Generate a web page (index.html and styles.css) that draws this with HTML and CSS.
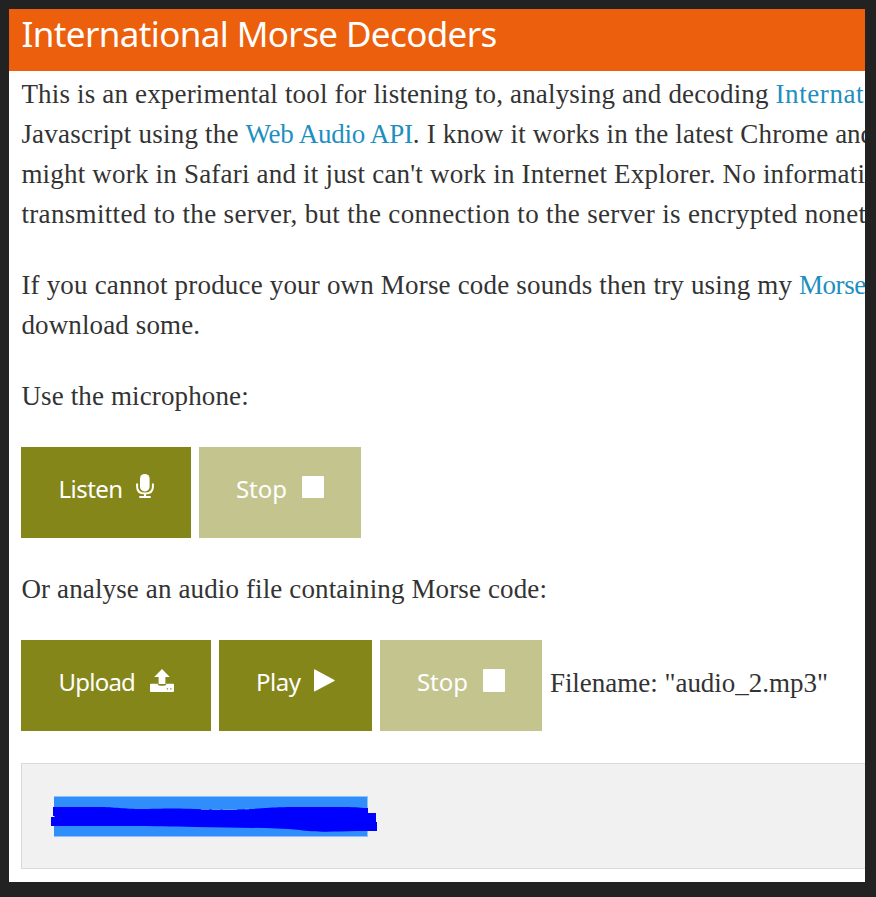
FILE: index.html
```
<!DOCTYPE html>
<html lang="en">
<head>
<meta charset="utf-8">
<title>International Morse Decoders</title>
<link rel="stylesheet" href="styles.css">
</head>
<body>
<main class="page">
  <header class="banner"><h1>International Morse Decoders</h1></header>
  <div class="content">
    <p>
      <span class="line"><span class="intro">This is an experimental tool for listening to, analysing and decoding</span> <a class="morse-link">Internat</a></span>
      <span class="line"><span class="script">Javascript using the</span> <a class="api-link">Web Audio API</a><span class="support">. I know it works in the latest Chrome</span> and</span>
      <span class="line safari">might work in Safari and it just can't work in Internet Explorer. No informati</span>
      <span class="line server">transmitted to the server, but the connection to the server is encrypted nonet</span>
    </p>
    <p>
      <span class="line"><span class="support">If you cannot produce your own Morse code sounds then try using my</span> <a class="generator-link">Morse</a></span>
      <span class="line label">download some.</span>
    </p>
    <p class="label">Use the microphone:</p>
    <div class="controls">
      <button class="btn listen"><span>Listen</span>
        <svg class="mic" width="18" height="24" viewBox="0 0 18 24"><rect x="4" y="0" width="9.6" height="17.4" rx="4.6" fill="#fff"/><path d="M1.1 9.5v3.2c0 4.2 3 6.8 7.9 6.8s7.9-2.6 7.9-6.8V9.5M9 19.5v3M3.3 22.9h11.4" fill="none" stroke="#fff" stroke-width="2"/></svg>
      </button>
      <button class="btn stop" disabled><span>Stop</span><i class="square"></i></button>
    </div>
    <p class="label">Or analyse an audio file containing Morse code:</p>
    <div class="controls">
      <button class="btn upload"><span>Upload</span>
        <svg class="up" width="24" height="23" viewBox="0 0 24 23"><path fill="#fff" d="M12 0l7.8 8h-4.4v7H8.6V8H4.2z"/><path fill="#fff" fill-rule="evenodd" d="M1 14.8h6.6c.3 1.3 1.2 2 2.4 2h4c1.2 0 2.1-.7 2.4-2H23a1 1 0 0 1 1 1V22a1 1 0 0 1-1 1H1a1 1 0 0 1-1-1v-6.2a1 1 0 0 1 1-1zM16.8 19.2v1.3h1.3v-1.3zm3.4 0v1.3h1.3v-1.3z"/></svg>
      </button>
      <button class="btn play"><span>Play</span>
        <svg class="tri" width="21" height="23" viewBox="0 0 21 23"><path fill="#fff" d="M0 1.2Q0 0 1 .5l19.4 10.4q.8.5 0 1L1 22.3q-1 .5-1-.7z"/></svg>
      </button>
      <button class="btn stop" disabled><span>Stop</span><i class="square"></i></button>
      <span class="filename">Filename: "audio_2.mp3"</span>
    </div>
    <div class="output">
      <svg class="scribble" width="328" height="42" viewBox="50 795 328 42">
        <path fill="#8fc2fa" d="M54 796h314v41H54z"/>
        <path fill="#308efc" d="M54 797h313v39H54z"/>
        <path fill="#00f" d="M53 807h45c18 0 24 2 45 2 24-.5 34-1 52 0 21 1 40 1 56 0 26-2 36-2 51-2h35c18-.5 24 1 31 1v5h8v9h1v9h-20c-29 1-45 1-57-1-37-3-68-2-105-3-45-1-76-1-144-1v-9h4v-1h-2z"/>
        <path d="M201 809.5h8m3 0h8m3 0h14M245 809h4" stroke="#80b8ff" stroke-width=".6"/>
      </svg>
    </div>
  </div>
</main>
</body>
</html>
```
FILE: styles.css
```
body {
  margin: 0;
  background: #222;
  color: #333;
  font: 27px/40px "Liberation Serif", serif;
}
.page {
  width: 856px;
  height: 873px;
  margin: 9px 0 0 9px;
  overflow: hidden;
  background: #fff;
}
.banner {
  box-sizing: border-box;
  height: 62px;
  padding: 1px 12.5px 0;
  background: #ec5f0c;
}
h1 {
  margin: 0;
  color: #fff;
  font: 400 35px/48px "Noto Sans", sans-serif;
  letter-spacing: -.62px;
}
.content { padding: 2.6px 0 0 12.4px; }
p { margin: 0 0 31px; white-space: nowrap; }
.line { display: block; }
a { color: #1e8fc0; }
.intro { letter-spacing: .17px; }
.morse-link { letter-spacing: .6px; }
.script { letter-spacing: .22px; }
.api-link { letter-spacing: -.23px; }
.support { letter-spacing: .18px; }
.safari { letter-spacing: .2px; }
.server { letter-spacing: .34px; }
.generator-link { letter-spacing: -.4px; }
.label { letter-spacing: .13px; }
.controls {
  display: flex;
  gap: 7.5px;
  height: 91px;
  margin-bottom: 31.5px;
}
.btn {
  box-sizing: border-box;
  display: flex;
  justify-content: space-between;
  align-items: flex-start;
  height: 91px;
  border: 0;
  padding: 25px 37px 0;
  background: #84861a;
  color: #fff;
  font: 24px/33px "Noto Sans", sans-serif;
}
.listen { width: 170px; letter-spacing: -.5px; }
.upload { width: 190px; letter-spacing: -.75px; }
.play { width: 153.5px; letter-spacing: -.4px; }
.stop { width: 162.5px; background: #c4c58e; }
.btn svg { display: block; flex: none; }
.mic { margin-top: 2px; }
.up { margin-top: 3.5px; }
.tri { margin-top: 4px; }
.square {
  width: 22.5px;
  height: 22.5px;
  margin-top: 4px;
  border-radius: 1px;
  background: #fff;
}
.filename {
  padding-top: 22.5px;
  white-space: nowrap;
  letter-spacing: -.02px;
}
.output {
  box-sizing: border-box;
  height: 106px;
  padding: 31px 0 0 27.5px;
  border: 1px solid #d9d9d9;
  border-right: 0;
  background: #f1f1f1;
}
.scribble { display: block; }
```
